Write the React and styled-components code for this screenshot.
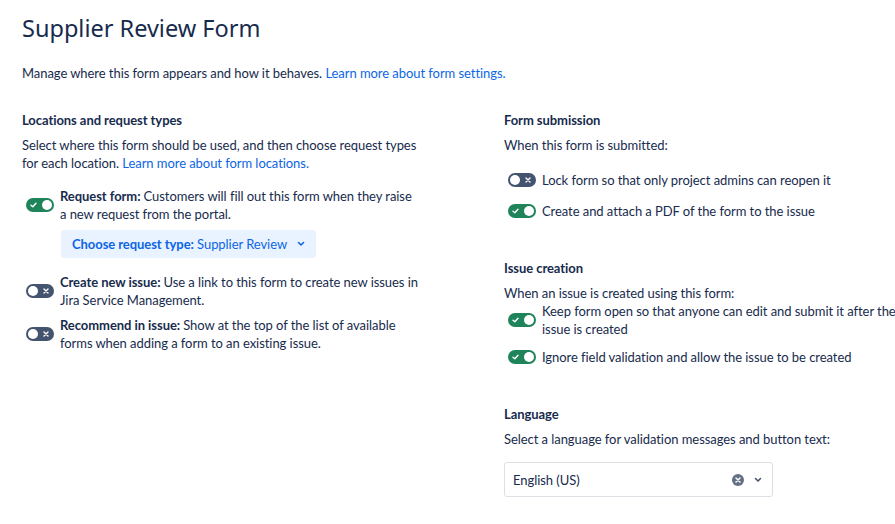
import React from "react";
import styled, { createGlobalStyle } from "styled-components";

const GlobalStyle = createGlobalStyle`
  body {
    margin: 0;
    overflow-x: hidden;
    background: #ffffff;
    font-family: Lato, "Noto Sans", sans-serif;
    color: #172b4d;
  }
`;

const Page = styled.div`
  padding: 14px 0 0 22px;
  font-size: 13px;
  line-height: 18px;
  letter-spacing: -0.06px;
`;

const Title = styled.h1`
  margin: 0;
  font-family: "Noto Sans", "Open Sans", sans-serif;
  font-size: 23.5px;
  line-height: 28px;
  font-weight: 400;
  letter-spacing: 0;
`;

const Intro = styled.p`
  margin: 22px 0 0;
`;

const Link = styled.a`
  color: #0c66e4;
  text-decoration: none;
`;

const Columns = styled.div`
  display: grid;
  grid-template-columns: 398px 400px;
  column-gap: 84px;
  margin-top: 29px;
`;

const Column = styled.div`
  display: flex;
  flex-direction: column;
`;

const Section = styled.section`
  display: flex;
  flex-direction: column;
  & + & {
    margin-top: 36px;
  }
`;

const Heading = styled.h2`
  margin: 0;
  font-size: 13px;
  line-height: 18px;
  font-weight: 700;
`;

const Desc = styled.p`
  margin: 7px 0 0;
`;

const Options = styled.div`
  display: flex;
  flex-direction: column;
  gap: 7px;
  margin-top: ${(p) => p.$top ?? 14}px;
`;

const OptionRow = styled.label`
  display: flex;
  align-items: center;
  gap: 6px;
  min-height: 24px;
`;

const OptionText = styled.span`
  flex: 1;
  b {
    font-weight: 700;
  }
`;

const Track = styled.span`
  flex: none;
  position: relative;
  width: 28px;
  height: 14px;
  margin-left: 4px;
  border-radius: 7px;
  background: ${(p) => (p.$on ? "#1f845a" : "#44546f")};
`;

const Knob = styled.span`
  position: absolute;
  top: 2px;
  left: ${(p) => (p.$on ? "16px" : "2px")};
  width: 10px;
  height: 10px;
  border-radius: 50%;
  background: #ffffff;
`;

const TrackIcon = styled.svg`
  position: absolute;
  top: 4px;
  left: ${(p) => (p.$on ? "4px" : "17px")};
`;

function Toggle({ on }) {
  return (
    <Track $on={on}>
      {on ? (
        <TrackIcon $on width="7" height="6" viewBox="0 0 7 6">
          <path d="M1 3.2 L2.8 4.8 L6 1.2" stroke="#fff" strokeWidth="1.4" fill="none" strokeLinecap="round" strokeLinejoin="round" />
        </TrackIcon>
      ) : (
        <TrackIcon width="6" height="6" viewBox="0 0 6 6">
          <path d="M1 1 L5 5 M5 1 L1 5" stroke="#fff" strokeWidth="1.4" strokeLinecap="round" />
        </TrackIcon>
      )}
      <Knob $on={on} />
    </Track>
  );
}

function Option({ on, label, children }) {
  return (
    <OptionRow>
      <Toggle on={on} />
      <OptionText>
        {label && <b>{label} </b>}
        {children}
      </OptionText>
    </OptionRow>
  );
}

const RequestTypeButton = styled.button`
  align-self: flex-start;
  display: flex;
  align-items: center;
  gap: 10px;
  height: 28px;
  margin: 7px 0 8px 39px;
  padding: 0 11px;
  border: none;
  border-radius: 3px;
  background: #e9f2ff;
  color: #0c66e4;
  font: inherit;
  letter-spacing: inherit;
  b {
    font-weight: 700;
  }
`;

const SelectBox = styled.div`
  display: flex;
  align-items: center;
  width: 269px;
  height: 35px;
  margin-top: 14px;
  padding: 0 10px 0 8px;
  box-sizing: border-box;
  border: 1px solid #dcdfe4;
  border-radius: 3px;
  background: #ffffff;
`;

const SelectValue = styled.span`
  flex: 1;
`;

const SelectIcons = styled.span`
  display: flex;
  align-items: center;
  gap: 10px;
`;

function Chevron({ color }) {
  return (
    <svg width="8" height="6" viewBox="0 0 8 6">
      <path d="M1.5 1.5 L4 4 L6.5 1.5" stroke={color} strokeWidth="1.6" fill="none" strokeLinecap="round" strokeLinejoin="round" />
    </svg>
  );
}

function ClearIcon() {
  return (
    <svg width="12" height="12" viewBox="0 0 12 12">
      <circle cx="6" cy="6" r="6" fill="#626f86" />
      <path d="M4 4 L8 8 M8 4 L4 8" stroke="#fff" strokeWidth="1.5" strokeLinecap="round" />
    </svg>
  );
}

export default function App() {
  return (
    <Page>
      <GlobalStyle />
      <Title>Supplier Review Form</Title>
      <Intro>
        Manage where this form appears and how it behaves.{" "}
        <Link href="#">Learn more about form settings.</Link>
      </Intro>
      <Columns>
        <Column>
          <Section>
            <Heading>Locations and request types</Heading>
            <Desc>
              Select where this form should be used, and then choose request
              types for each location.{" "}
              <Link href="#">Learn more about form locations.</Link>
            </Desc>
            <Options $top={15}>
              <Option on label="Request form:">
                Customers will fill out this form when they raise a new request
                from the portal.
              </Option>
            </Options>
            <RequestTypeButton>
              <span>
                <b>Choose request type:</b> Supplier Review
              </span>
              <Chevron color="#0c66e4" />
            </RequestTypeButton>
            <Options $top={7}>
              <Option label="Create new issue:">
                Use a link to this form to create new issues in Jira Service
                Management.
              </Option>
              <Option label="Recommend in issue:">
                Show at the top of the list of available forms when adding a
                form to an existing issue.
              </Option>
            </Options>
          </Section>
        </Column>
        <Column>
          <Section>
            <Heading>Form submission</Heading>
            <Desc>When this form is submitted:</Desc>
            <Options>
              <Option>Lock form so that only project admins can reopen it</Option>
              <Option on>Create and attach a PDF of the form to the issue</Option>
            </Options>
          </Section>
          <Section>
            <Heading>Issue creation</Heading>
            <Desc>When an issue is created using this form:</Desc>
            <Options $top={0}>
              <Option on>
                Keep form open so that anyone can edit and submit it after the
                issue is created
              </Option>
              <Option on>Ignore field validation and allow the issue to be created</Option>
            </Options>
          </Section>
          <Section>
            <Heading>Language</Heading>
            <Desc>Select a language for validation messages and button text:</Desc>
            <SelectBox>
              <SelectValue>English (US)</SelectValue>
              <SelectIcons>
                <ClearIcon />
                <Chevron color="#44546f" />
              </SelectIcons>
            </SelectBox>
          </Section>
        </Column>
      </Columns>
    </Page>
  );
}
